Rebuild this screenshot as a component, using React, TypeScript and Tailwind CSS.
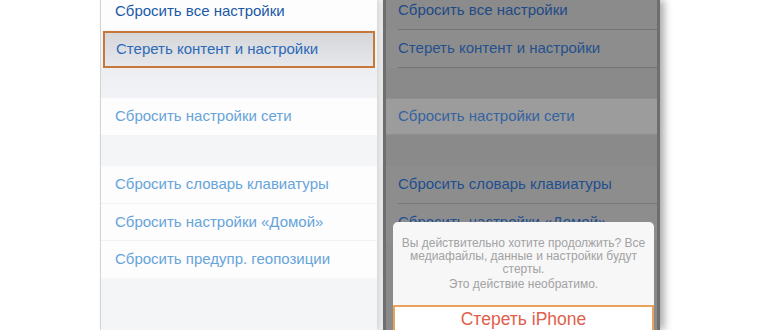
import React from 'react';

const font = { fontFamily: '"Liberation Sans", Arial, sans-serif' };

function LeftPanel() {
  return (
    <div className="relative h-[330px] w-[277px] overflow-hidden border-l border-[#d4d4d6] bg-[#f4f5f7] shadow-[2px_0_4px_rgba(0,0,0,0.12)]">
      <div className="mt-[-8px] flex h-[38px] items-center bg-[#fdfdfd] pl-[14px] text-[15px] text-[#1a59a6]">
        Сбросить все настройки
      </div>
      <div className="mx-[2px] mt-[1px] flex h-[37px] items-center border-2 border-[#c8773a] bg-gradient-to-b from-[#d6d7da] to-[#e6e7ea] pl-[11px] text-[15px] text-[#2b6ab8]">
        Стереть контент и настройки
      </div>
      <div className="h-[30px] bg-gradient-to-b from-[#eceef2] to-[#f2f3f6]" />
      <div className="flex h-[37px] items-center bg-[#fdfdfd] pl-[14px] text-[15px] text-[#66a4da]">
        Сбросить настройки сети
      </div>
      <div className="h-[31px]" />
      <div className="bg-[#fdfdfd]">
        <div className="flex h-[38px] items-center border-b border-[#f1f1f3] pl-[14px] text-[15px] text-[#66a4da]">
          Сбросить словарь клавиатуры
        </div>
        <div className="flex h-[37px] items-center border-b border-[#f1f1f3] pl-[14px] text-[15px] text-[#66a4da]">
          Сбросить настройки «Домой»
        </div>
        <div className="flex h-[37px] items-center pl-[14px] text-[15px] text-[#66a4da]">
          Сбросить предупр. геопозиции
        </div>
      </div>
    </div>
  );
}

function RightPanel() {
  return (
    <div className="relative h-[330px] w-[277px] overflow-hidden border-x-[3px] border-[#6e6e70] bg-[#8a8a8b] shadow-[4px_0_8px_rgba(0,0,0,0.35)]">
      <div className="mt-[-8px] flex h-[38px] items-center bg-[#8b8b8c] pl-[12px] text-[15px] text-[#1d4a86]">
        <span className="flex h-full w-full items-center border-b border-[#737374]">Сбросить все настройки</span>
      </div>
      <div className="flex h-[38px] items-center bg-[#8d8d8e] pl-[12px] text-[15px] text-[#24518d]">
        <span className="flex h-full w-full items-center border-b border-[#747475]">Стереть контент и настройки</span>
      </div>
      <div className="h-[30px] bg-[#8a8a8b]" />
      <div className="flex h-[37px] items-center border-y border-[#8e8e8f] bg-[#9c9c9d] pl-[12px] text-[15px] text-[#34639f]">
        Сбросить настройки сети
      </div>
      <div className="h-[31px] bg-[#8a8a8b]" />
      <div className="bg-[#8d8d8e]">
        <div className="ml-[12px] flex h-[38px] items-center border-b border-[#777778] text-[15px] text-[#1f4f8f]">
          Сбросить словарь клавиатуры
        </div>
        <div className="ml-[12px] flex h-[37px] items-center text-[15px] text-[#1f4f8f]">
          Сбросить настройки «Домой»
        </div>
      </div>

      <div className="absolute left-[7px] top-[222px] flex w-[261px] flex-col rounded-t-[5px] bg-[#f7f7f7]">
        <div className="flex h-[83px] flex-col items-center pt-[15px] text-center text-[12px] leading-[13px] text-[#a2a2a4]">
          <p>Вы действительно хотите продолжить? Все</p>
          <p>медиафайлы, данные и настройки будут</p>
          <p>стерты.</p>
          <p className="mt-[2px]">Это действие необратимо.</p>
        </div>
        <div className="flex h-[36px] justify-center border-2 border-[#eaa25a] bg-white pt-[3px] text-[17.5px] leading-[18px] text-[#e0604c]">
          Стереть iPhone
        </div>
      </div>
    </div>
  );
}

export default function App() {
  return (
    <div className="flex h-[330px] w-[770px] overflow-hidden bg-white" style={font}>
      <div className="w-[100px]" />
      <LeftPanel />
      <div className="w-[6px] bg-[#f2f2f2]" />
      <RightPanel />
    </div>
  );
}
